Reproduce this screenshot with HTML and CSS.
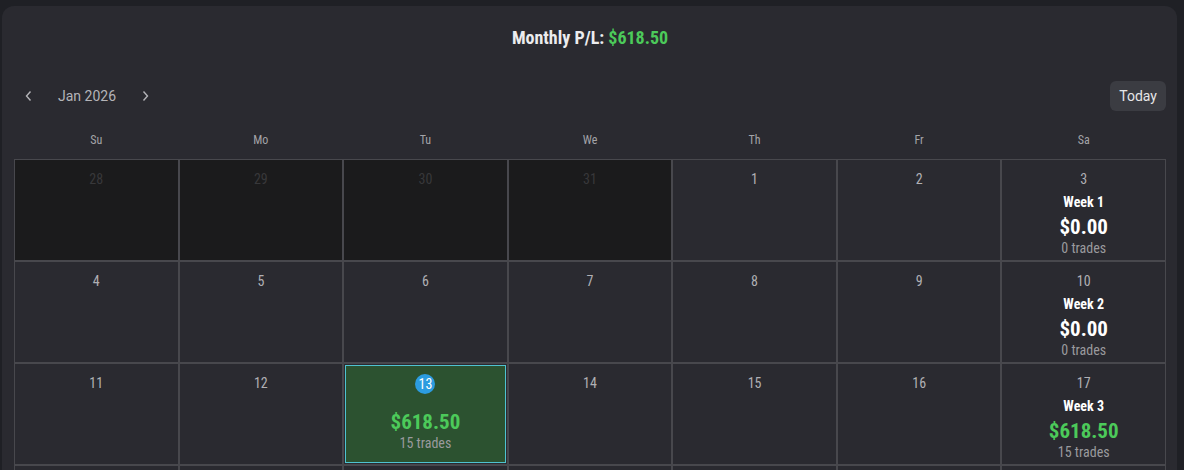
FILE: index.html
```html
<!DOCTYPE html>
<html lang="en">
<head>
    <meta charset="UTF-8">
    <meta name="viewport" content="width=device-width, initial-scale=1.0">
    <title>Trading Calendar</title>
    <link rel="stylesheet" href="styles.css">
</head>
<body>
    <div class="calendar-card">
        <div class="monthly-pl">Monthly P/L: <span class="profit">$618.50</span></div>

        <div class="toolbar">
            <div class="month-nav">
                <button class="nav-btn" aria-label="Previous month">
                    <svg width="10" height="12" viewBox="0 0 10 12"><path d="M6.5 1.5 L2.5 6 L6.5 10.5" fill="none" stroke="currentColor" stroke-width="1.4"/></svg>
                </button>
                <span class="month-label">Jan 2026</span>
                <button class="nav-btn" aria-label="Next month">
                    <svg width="10" height="12" viewBox="0 0 10 12"><path d="M3.5 1.5 L7.5 6 L3.5 10.5" fill="none" stroke="currentColor" stroke-width="1.4"/></svg>
                </button>
            </div>
            <button class="today-btn">Today</button>
        </div>

        <div class="weekdays">
            <div>Su</div><div>Mo</div><div>Tu</div><div>We</div><div>Th</div><div>Fr</div><div>Sa</div>
        </div>

        <div class="grid">
            <div class="cell outside"><div class="day">28</div></div>
            <div class="cell outside"><div class="day">29</div></div>
            <div class="cell outside"><div class="day">30</div></div>
            <div class="cell outside"><div class="day">31</div></div>
            <div class="cell"><div class="day">1</div></div>
            <div class="cell"><div class="day">2</div></div>
            <div class="cell">
                <div class="day">3</div>
                <div class="week-name">Week 1</div>
                <div class="amount">$0.00</div>
                <div class="trades">0 trades</div>
            </div>

            <div class="cell"><div class="day">4</div></div>
            <div class="cell"><div class="day">5</div></div>
            <div class="cell"><div class="day">6</div></div>
            <div class="cell"><div class="day">7</div></div>
            <div class="cell"><div class="day">8</div></div>
            <div class="cell"><div class="day">9</div></div>
            <div class="cell">
                <div class="day">10</div>
                <div class="week-name">Week 2</div>
                <div class="amount">$0.00</div>
                <div class="trades">0 trades</div>
            </div>

            <div class="cell"><div class="day">11</div></div>
            <div class="cell"><div class="day">12</div></div>
            <div class="cell today win">
                <div class="day"><span class="today-badge">13</span></div>
                <div class="amount profit">$618.50</div>
                <div class="trades">15 trades</div>
            </div>
            <div class="cell"><div class="day">14</div></div>
            <div class="cell"><div class="day">15</div></div>
            <div class="cell"><div class="day">16</div></div>
            <div class="cell">
                <div class="day">17</div>
                <div class="week-name">Week 3</div>
                <div class="amount profit">$618.50</div>
                <div class="trades">15 trades</div>
            </div>

            <!-- next week row starts just below the fold -->
            <div class="cell"></div>
            <div class="cell"></div>
            <div class="cell"></div>
            <div class="cell"></div>
            <div class="cell"></div>
            <div class="cell"></div>
            <div class="cell"></div>
        </div>
    </div>
</body>
</html>
```

FILE: styles.css
```css
* {
    margin: 0;
    padding: 0;
    box-sizing: border-box;
}

body {
    background: #1f2025;
    font-family: Roboto, "Liberation Sans", sans-serif;
    color: #e6e6e8;
    padding: 6px 0 0 2px;
    height: 100vh;
    overflow: hidden;
}

.calendar-card {
    width: 1175px;
    background: #2a2a30;
    border-radius: 12px;
    padding: 20px 11px 0 12px;
}

.monthly-pl,
.weekdays,
.cell {
    font-family: "Roboto Condensed", Roboto, sans-serif;
    font-stretch: condensed;
}

.monthly-pl {
    text-align: center;
    font-size: 18px;
    font-weight: bold;
    color: #ececee;
    line-height: 24px;
}

.profit {
    color: #4cca5a;
}

.toolbar {
    display: flex;
    justify-content: space-between;
    align-items: center;
    margin-top: 30px;
    height: 31px;
}

.month-nav {
    display: flex;
    align-items: center;
}

.nav-btn {
    background: none;
    border: none;
    color: #b4b4b8;
    width: 30px;
    height: 30px;
    display: flex;
    align-items: center;
    justify-content: center;
    cursor: pointer;
}

.month-label {
    font-size: 14px;
    color: #b4b4b8;
    width: 86px;
    text-align: center;
}

.today-btn {
    background: #3b3c42;
    border: none;
    border-radius: 6px;
    color: #e6e6e8;
    font-family: Roboto, sans-serif;
    font-size: 14px;
    padding: 0 9px;
    height: 30px;
}

.weekdays {
    display: grid;
    grid-template-columns: repeat(7, 1fr);
    margin-top: 22px;
    font-size: 12px;
    color: #a4a4a8;
    text-align: center;
    line-height: 14px;
    padding-bottom: 12px;
}

.grid {
    display: grid;
    grid-template-columns: repeat(7, 1fr);
    grid-auto-rows: 102px;
}

.cell {
    border: 1px solid #48484d;
    display: flex;
    flex-direction: column;
    align-items: center;
    padding-top: 10px;
    text-align: center;
}

.cell.outside {
    background: #1b1b1c;
}

.day {
    font-size: 14px;
    color: #b0b0b4;
    line-height: 18px;
    height: 18px;
}

.outside .day {
    color: #38383a;
}

.week-name {
    font-size: 14px;
    font-weight: bold;
    color: #ffffff;
    margin-top: 6px;
    line-height: 16px;
}

.amount {
    font-size: 21px;
    font-weight: bold;
    color: #ffffff;
    line-height: 26px;
    margin-top: 4px;
}

.amount.profit {
    color: #4cca5a;
}

.trades {
    font-size: 14px;
    color: #9a9a9e;
    line-height: 16px;
}

.cell.win {
    background: #2c5230;
}

.cell.today {
    box-shadow: inset 0 0 0 1px #2a2a30, inset 0 0 0 2px #4fc3d0;
}

.win .amount {
    margin-top: 17px;
}

.today-badge {
    display: inline-flex;
    align-items: center;
    justify-content: center;
    width: 20px;
    height: 20px;
    border-radius: 50%;
    background: #2c9ce0;
    color: #ffffff;
    font-size: 14px;
}
```
